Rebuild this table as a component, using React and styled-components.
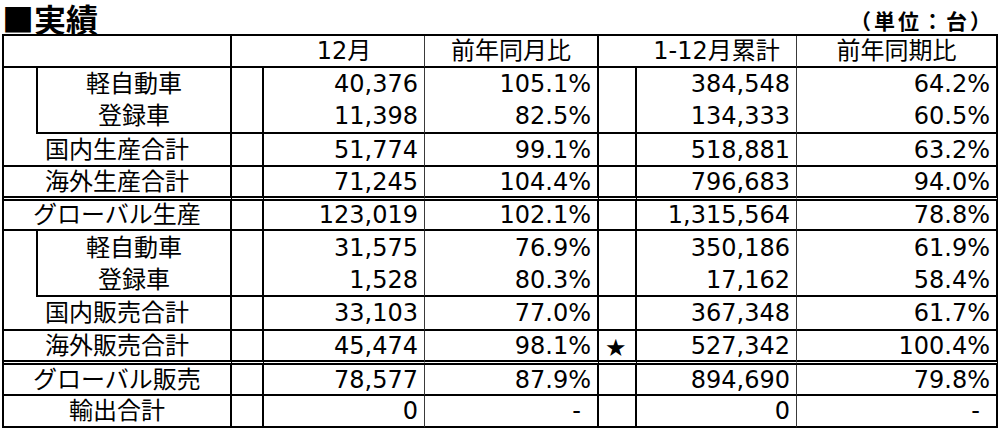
import React from 'react';
import styled, { createGlobalStyle } from 'styled-components';

const Global = createGlobalStyle`
  html, body { margin: 0; padding: 0; background: #fff; }
  body { font-family: "DejaVu Sans", "Noto Sans CJK JP", sans-serif; color: #000; }
`;

const BORDERS = {
  none: 'none',
  thin: '1px solid #3a3a3a',
  thick: '2px solid #000',
  double: '5px double #000',
};

const Page = styled.div`
  width: 1000px;
  height: 431px;
  padding: 0 2px;
  box-sizing: border-box;
`;

const TitleBar = styled.div`
  display: flex;
  justify-content: space-between;
  align-items: flex-end;
  height: 34px;
  width: 996px;
`;

const Title = styled.h1`
  margin: 0;
  font-family: "Noto Sans CJK JP", sans-serif;
  font-weight: 700;
  font-size: 32px;
  line-height: 32px;
`;

const Unit = styled.span`
  font-family: "Noto Sans CJK JP", sans-serif;
  font-weight: 700;
  font-size: 21px;
  line-height: 21px;
  letter-spacing: 3px;
  margin: 0 4px 3px 0;
`;

const Grid = styled.div`
  display: grid;
  grid-template-columns: 34px 194px 32px 161px 174px 38px 160px 201px;
  grid-template-rows: 32px 32px 34px 33px 34px 30px 33px 33px 34px 34px 31px 32px;
  border-top: 2px solid #000;
  border-left: 2px solid #000;
  width: max-content;
`;

const Cell = styled.div`
  box-sizing: border-box;
  display: flex;
  align-items: center;
  justify-content: ${(p) =>
    p.$align === 'right' ? 'flex-end' : p.$align === 'left' ? 'flex-start' : 'center'};
  grid-column: span ${(p) => p.$cols || 1};
  grid-row: span ${(p) => p.$rows || 1};
  border-right: ${(p) => BORDERS[p.$r || 'none']};
  border-bottom: ${(p) => BORDERS[p.$b || 'none']};
  padding: 0 ${(p) => p.$pr || 0}px 0 ${(p) => p.$pl || 0}px;
  font-size: 24px;
  line-height: 1;
  white-space: nowrap;
`;

const Star = styled.span`
  font-family: "DejaVu Sans", sans-serif;
  font-size: 24px;
  line-height: 1;
  padding-top: 5px;
`;

const rows = [
  { kind: 'sub1', label: '軽自動車', m: '40,376', mr: '105.1%', y: '384,548', yr: '64.2%', b: 'none' },
  { kind: 'sub2', label: '登録車', m: '11,398', mr: '82.5%', y: '134,333', yr: '60.5%', b: 'thick' },
  { kind: 'total', label: '国内生産合計', m: '51,774', mr: '99.1%', y: '518,881', yr: '63.2%', b: 'thick' },
  { kind: 'total', label: '海外生産合計', m: '71,245', mr: '104.4%', y: '796,683', yr: '94.0%', b: 'double' },
  { kind: 'total', label: 'グローバル生産', m: '123,019', mr: '102.1%', y: '1,315,564', yr: '78.8%', b: 'thick' },
  { kind: 'sub1', label: '軽自動車', m: '31,575', mr: '76.9%', y: '350,186', yr: '61.9%', b: 'none' },
  { kind: 'sub2', label: '登録車', m: '1,528', mr: '80.3%', y: '17,162', yr: '58.4%', b: 'thick' },
  { kind: 'total', label: '国内販売合計', m: '33,103', mr: '77.0%', y: '367,348', yr: '61.7%', b: 'thick' },
  { kind: 'total', label: '海外販売合計', m: '45,474', mr: '98.1%', star: true, y: '527,342', yr: '100.4%', b: 'double' },
  { kind: 'total', label: 'グローバル販売', m: '78,577', mr: '87.9%', y: '894,690', yr: '79.8%', b: 'thick' },
  { kind: 'total', label: '輸出合計', m: '0', mr: '-', y: '0', yr: '-', b: 'thick' },
];

const numPad = (v) => (v === '-' ? 16 : 6);

function LabelCells({ row }) {
  if (row.kind === 'sub1') {
    return (
      <>
        <Cell $rows={2} $r="thick" $b="none" />
        <Cell $r="thick" $b="none">{row.label}</Cell>
      </>
    );
  }
  if (row.kind === 'sub2') {
    return <Cell $r="thick" $b="thick">{row.label}</Cell>;
  }
  return (
    <Cell $cols={2} $r="thick" $b={row.b}>
      {row.label}
    </Cell>
  );
}

function DataRow({ row }) {
  const b = row.b;
  return (
    <>
      <LabelCells row={row} />
      <Cell $r="thick" $b={b} />
      <Cell $r="thin" $b={b} $align="right" $pr={numPad(row.m)}>{row.m}</Cell>
      <Cell $r="thick" $b={b} $align="right" $pr={numPad(row.mr)}>{row.mr}</Cell>
      <Cell $r="thick" $b={b} $align="left" $pl={6}>
        {row.star ? <Star>★</Star> : null}
      </Cell>
      <Cell $r="thin" $b={b} $align="right" $pr={numPad(row.y)}>{row.y}</Cell>
      <Cell $r="thick" $b={b} $align="right" $pr={numPad(row.yr)}>{row.yr}</Cell>
    </>
  );
}

export default function App() {
  return (
    <>
      <Global />
      <Page>
        <TitleBar>
          <Title>■実績</Title>
          <Unit>（単位：台）</Unit>
        </TitleBar>
        <Grid>
          <Cell $cols={2} $r="thick" $b="thick" />
          <Cell $r="none" $b="thick" />
          <Cell $r="thin" $b="thick">12月</Cell>
          <Cell $r="thick" $b="thick">前年同月比</Cell>
          <Cell $r="none" $b="thick" />
          <Cell $r="thin" $b="thick">1-12月累計</Cell>
          <Cell $r="thick" $b="thick">前年同期比</Cell>
          {rows.map((row, i) => (
            <DataRow key={i} row={row} />
          ))}
        </Grid>
      </Page>
    </>
  );
}
